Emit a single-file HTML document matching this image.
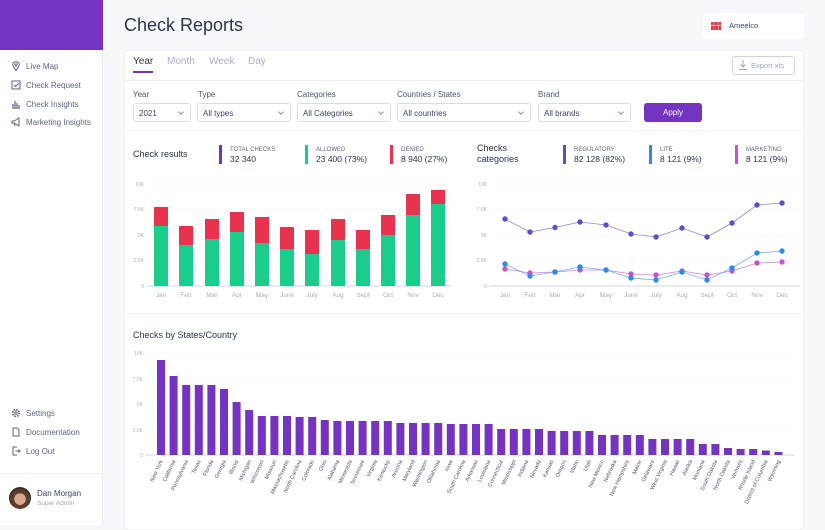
<!DOCTYPE html>
<html><head><meta charset="utf-8"><style>
*{margin:0;padding:0;box-sizing:border-box}
body{width:825px;height:525px;overflow:hidden;background:#f7f8fb;font-family:"Liberation Sans",sans-serif;position:relative;color:#2b3550}
.abs{position:absolute}
#side{left:0;top:0;width:103px;height:525px;background:#fff;border-right:1px solid #eceef3}
#logo{left:0;top:0;width:103px;height:50px;background:#7433c0}
.nav{position:absolute;left:11px;font-size:8px;color:#5a6680;display:flex;align-items:center;gap:5px}
.nav svg{width:10px;height:10px}
.lbl{font-size:8px;color:#4a5670;position:absolute}
.sel{position:absolute;height:19px;border:1px solid #d9dde6;border-radius:3px;font-size:8px;color:#3a4560;padding:5px 5px;background:#fff}
.sel:after{content:"";position:absolute;right:7px;top:6px;width:3px;height:3px;border-right:1px solid #8a93a8;border-bottom:1px solid #8a93a8;transform:rotate(45deg)}
</style></head><body>
<div id="side" class="abs"></div>
<div id="logo" class="abs"></div>
<div class="nav" style="top:61px"><svg viewBox="0 0 10 10"><path d="M5 9.5C3 7 1.8 5.5 1.8 3.8A3.2 3.2 0 0 1 8.2 3.8C8.2 5.5 7 7 5 9.5Z" fill="none" stroke="#5a6680"/><circle cx="5" cy="3.8" r="1.1" fill="none" stroke="#5a6680"/></svg>Live Map</div>
<div class="nav" style="top:80px"><svg viewBox="0 0 10 10"><rect x="1" y="1" width="8" height="8" fill="none" stroke="#5a6680"/><path d="M3 5l1.5 1.5L8 3" fill="none" stroke="#5a6680"/></svg>Check Request</div>
<div class="nav" style="top:99px"><svg viewBox="0 0 10 10"><path d="M1 9h8M2 8V5M4 8V2M6 8V4M8 8V6" stroke="#5a6680" stroke-width="1.2"/></svg>Check Insights</div>
<div class="nav" style="top:117px"><svg viewBox="0 0 10 10"><path d="M1 4h2l5-3v8L3 6H1z M3 6l1 3" fill="none" stroke="#5a6680"/></svg>Marketing Insights</div>
<div class="nav" style="top:408px"><svg viewBox="0 0 10 10"><circle cx="5" cy="5" r="3.3" fill="none" stroke="#5a6680" stroke-width="1.6" stroke-dasharray="1.6 1"/><circle cx="5" cy="5" r="1.2" fill="none" stroke="#5a6680"/></svg>Settings</div>
<div class="nav" style="top:427px"><svg viewBox="0 0 10 10"><path d="M2 1h4l2 2v6H2z" fill="none" stroke="#5a6680"/></svg>Documentation</div>
<div class="nav" style="top:446px"><svg viewBox="0 0 10 10"><path d="M6 1H2v8h4M4.5 5H9M7.5 3.5L9 5 7.5 6.5" fill="none" stroke="#5a6680"/></svg>Log Out</div>
<div class="abs" style="left:0;top:473px;width:103px;border-top:1px solid #eceef3"></div>
<div class="abs" style="left:9px;top:487px;width:22px;height:22px;border-radius:50%;background:radial-gradient(circle at 50% 55%,#d9a98a 0 35%,#5a3e30 36% 60%,#3a2a22 61%)"></div>
<div class="abs" style="left:37px;top:489px;font-size:8px;color:#3a4560">Dan Morgan</div>
<div class="abs" style="left:37px;top:500px;font-size:6.5px;color:#a0a8bb">Super Admin</div>

<div class="abs" style="left:124px;top:15px;font-size:18px;color:#2b3550">Check Reports</div>
<div class="abs" style="left:703px;top:13px;width:101px;height:26px;background:#fff;border-radius:4px"></div>
<div class="abs" style="left:711px;top:22px;width:10px;height:8px;background:repeating-linear-gradient(90deg,#e8323c 0 2px,#f7a0a4 2px 2.6px),#e8323c"></div>
<div class="abs" style="left:711px;top:25px;width:10px;height:1px;background:#fbc8ca"></div>
<div class="abs" style="left:729px;top:21px;font-size:7.5px;color:#3a4560">Ameelco</div>

<div class="abs" style="left:124px;top:50px;width:680px;height:480px;background:#fff;border:1px solid #eef0f4;border-radius:4px"></div>
<div class="abs" style="left:133px;top:56px;font-size:10px;color:#2b3550">Year</div>
<div class="abs" style="left:167px;top:56px;font-size:10px;color:#a8b0c2">Month</div>
<div class="abs" style="left:209px;top:56px;font-size:10px;color:#a8b0c2">Week</div>
<div class="abs" style="left:248px;top:56px;font-size:10px;color:#a8b0c2">Day</div>
<div class="abs" style="left:133px;top:71px;width:20px;height:2px;background:#7433c0"></div>
<div class="abs" style="left:732px;top:56px;width:63px;height:19px;border:1px solid #cfd4e0;border-radius:3px;font-size:7.5px;color:#a0a8bb;padding:4px 0 0 18px">Export xls</div>
<svg class="abs" style="left:738px;top:59px" width="10" height="12" viewBox="0 0 10 12"><path d="M5 1v7M2.5 5.5L5 8l2.5-2.5M1 10.5h8" fill="none" stroke="#a0a8bb"/></svg>
<div class="abs" style="left:125px;top:80px;width:678px;border-top:1px solid #eef0f4"></div>
<div class="lbl" style="left:133px;top:90px">Year</div>
<div class="lbl" style="left:198px;top:90px">Type</div>
<div class="lbl" style="left:297px;top:90px">Categories</div>
<div class="lbl" style="left:397px;top:90px">Countries / States</div>
<div class="lbl" style="left:538px;top:90px">Brand</div>
<div class="sel" style="left:133px;top:103px;width:58px">2021</div>
<div class="sel" style="left:197px;top:103px;width:94px">All types</div>
<div class="sel" style="left:297px;top:103px;width:94px">All Categories</div>
<div class="sel" style="left:397px;top:103px;width:134px">All countries</div>
<div class="sel" style="left:538px;top:103px;width:93px">All brands</div>
<div class="abs" style="left:644px;top:103px;width:58px;height:19px;background:#7433c0;border-radius:3px;color:#fff;font-size:8px;text-align:center;line-height:19px">Apply</div>
<div class="abs" style="left:125px;top:130px;width:678px;border-top:1px solid #eef0f4"></div>
<div class="abs" style="left:125px;top:313px;width:678px;border-top:1px solid #eef0f4"></div>

<svg class="abs" style="left:0;top:0" width="825" height="525" font-family="Liberation Sans, sans-serif">
<g font-size="9" fill="#2b3550">
<text x="133" y="157">Check results</text>
<text x="477" y="151">Checks</text><text x="477" y="162">categories</text>
<text x="133" y="338">Checks by States/Country</text>
</g>
<g font-size="6" fill="#5a6680">
<text x="230" y="151">TOTAL CHECKS</text><text x="316" y="151">ALLOWED</text><text x="401" y="151">DENIED</text>
<text x="574" y="151">REGULATORY</text><text x="660" y="151">LITE</text><text x="746" y="151">MARKETING</text>
</g>
<g font-size="8.5" fill="#2b3550">
<text x="230" y="162">32 340</text><text x="316" y="162">23 400 (73%)</text><text x="401" y="162">8 940 (27%)</text>
<text x="574" y="162">82 128 (82%)</text><text x="660" y="162">8 121 (9%)</text><text x="746" y="162">8 121 (9%)</text>
</g>
<rect x="219" y="145" width="3" height="19" fill="#7433c0"/><rect x="305" y="145" width="3" height="19" fill="#1ccc8c"/><rect x="390" y="145" width="3" height="19" fill="#e8324e"/>
<rect x="563" y="145" width="3" height="19" fill="#5b4fc8"/><rect x="649" y="145" width="3" height="19" fill="#2d8ae8"/><rect x="735" y="145" width="3" height="19" fill="#c455d0"/>
<g stroke="#f2f3f7" stroke-width="0.6">
<path d="M148 184H450M148 209.5H450M148 235H450M148 260.5H450"/>
<path d="M490 184H800M490 209.5H800M490 235H800M490 260.5H800"/>
<path d="M145 353H795M145 378.5H795M145 404H795M145 429.5H795"/>
</g>
<path d="M147 286H450M489 286H800M145 455H795" stroke="#c8cde0" stroke-width="0.8"/>
<g font-size="5" fill="#a8b0c2" text-anchor="end">
<text x="144" y="186">10K</text><text x="144" y="211">7.5K</text><text x="144" y="237">5K</text><text x="144" y="262">2.5K</text><text x="144" y="288">0</text>
<text x="487" y="186">10K</text><text x="487" y="211">7.5K</text><text x="487" y="237">5K</text><text x="487" y="262">2.5K</text><text x="487" y="288">0</text>
<text x="143" y="355">10K</text><text x="143" y="381">7.5K</text><text x="143" y="406">5K</text><text x="143" y="432">2.5K</text><text x="143" y="457">0</text>
</g>
<g font-size="6.5" fill="#a8b0c2" text-anchor="middle">
<text x="161" y="297">Jan</text><text x="186" y="297">Feb</text><text x="212" y="297">Mar</text><text x="237" y="297">Apr</text><text x="262" y="297">May</text><text x="287" y="297">June</text><text x="312" y="297">July</text><text x="338" y="297">Aug</text><text x="363" y="297">Sept</text><text x="388" y="297">Oct</text><text x="413" y="297">Nov</text><text x="438" y="297">Dec</text>
<text x="505" y="297">Jan</text><text x="530" y="297">Feb</text><text x="555" y="297">Mar</text><text x="580" y="297">Apr</text><text x="606" y="297">May</text><text x="631" y="297">June</text><text x="656" y="297">July</text><text x="682" y="297">Aug</text><text x="707" y="297">Sept</text><text x="732" y="297">Oct</text><text x="757" y="297">Nov</text><text x="782" y="297">Dec</text>
</g>
<g fill="#e8324e">
<rect x="154" y="207" width="14" height="79"/><rect x="179" y="226" width="14" height="60"/><rect x="205" y="219" width="14" height="67"/><rect x="230" y="212" width="14" height="74"/><rect x="255" y="217" width="14" height="69"/><rect x="280" y="227" width="14" height="59"/><rect x="305" y="230" width="14" height="56"/><rect x="331" y="219" width="14" height="67"/><rect x="356" y="230" width="14" height="56"/><rect x="381" y="215" width="14" height="71"/><rect x="406" y="194" width="14" height="92"/><rect x="431" y="190" width="14" height="96"/>
</g>
<g fill="#1ccc8c">
<rect x="154" y="226" width="14" height="60"/><rect x="179" y="245" width="14" height="41"/><rect x="205" y="239" width="14" height="47"/><rect x="230" y="232" width="14" height="54"/><rect x="255" y="243" width="14" height="43"/><rect x="280" y="249" width="14" height="37"/><rect x="305" y="254" width="14" height="32"/><rect x="331" y="240" width="14" height="46"/><rect x="356" y="249" width="14" height="37"/><rect x="381" y="235" width="14" height="51"/><rect x="406" y="215" width="14" height="71"/><rect x="431" y="204" width="14" height="82"/>
</g>
<g fill="none" stroke-width="0.8">
<polyline stroke="#8f86e0" points="505,219 530,232 555,227.5 580,222 606,225 631,234 656,237 682,228 707,237 732,223 757,205 782,203"/>
<polyline stroke="#d27ee0" points="505,269 530,273 555,272 580,270 606,270 631,274 656,275 682,271 707,275 732,271 757,263 782,262"/>
<polyline stroke="#6fb0f0" points="505,264 530,276 555,272 580,267 606,270 631,278 656,280 682,272 707,280 732,268 757,253 782,251"/>
</g>
<g fill="#5b4fc8"><circle cx="505" cy="219" r="2.7"/><circle cx="530" cy="232" r="2.7"/><circle cx="555" cy="227.5" r="2.7"/><circle cx="580" cy="222" r="2.7"/><circle cx="606" cy="225" r="2.7"/><circle cx="631" cy="234" r="2.7"/><circle cx="656" cy="237" r="2.7"/><circle cx="682" cy="228" r="2.7"/><circle cx="707" cy="237" r="2.7"/><circle cx="732" cy="223" r="2.7"/><circle cx="757" cy="205" r="2.7"/><circle cx="782" cy="203" r="2.7"/></g>
<g fill="#c455d0"><circle cx="505" cy="269" r="2.7"/><circle cx="530" cy="273" r="2.7"/><circle cx="555" cy="272" r="2.7"/><circle cx="580" cy="270" r="2.7"/><circle cx="606" cy="270" r="2.7"/><circle cx="631" cy="274" r="2.7"/><circle cx="656" cy="275" r="2.7"/><circle cx="682" cy="271" r="2.7"/><circle cx="707" cy="275" r="2.7"/><circle cx="732" cy="271" r="2.7"/><circle cx="757" cy="263" r="2.7"/><circle cx="782" cy="262" r="2.7"/></g>
<g fill="#2d8ae8"><circle cx="505" cy="264" r="2.7"/><circle cx="530" cy="276" r="2.7"/><circle cx="555" cy="272" r="2.7"/><circle cx="580" cy="267" r="2.7"/><circle cx="606" cy="270" r="2.7"/><circle cx="631" cy="278" r="2.7"/><circle cx="656" cy="280" r="2.7"/><circle cx="682" cy="272" r="2.7"/><circle cx="707" cy="280" r="2.7"/><circle cx="732" cy="268" r="2.7"/><circle cx="757" cy="253" r="2.7"/><circle cx="782" cy="251" r="2.7"/></g>
<g fill="#7433c0">
<rect x="157" y="360" width="8" height="95"/><rect x="169.6" y="376" width="8" height="79"/><rect x="182.2" y="385" width="8" height="70"/><rect x="194.8" y="385" width="8" height="70"/><rect x="207.4" y="385" width="8" height="70"/><rect x="220" y="389" width="8" height="66"/><rect x="232.6" y="402" width="8" height="53"/><rect x="245.2" y="410" width="8" height="45"/><rect x="257.8" y="416" width="8" height="39"/><rect x="270.4" y="416" width="8" height="39"/><rect x="283" y="416" width="8" height="39"/><rect x="295.6" y="417" width="8" height="38"/><rect x="308.2" y="417" width="8" height="38"/><rect x="320.8" y="420" width="8" height="35"/><rect x="333.4" y="421" width="8" height="34"/><rect x="346" y="421" width="8" height="34"/><rect x="358.6" y="421" width="8" height="34"/><rect x="371.2" y="421" width="8" height="34"/><rect x="383.8" y="421" width="8" height="34"/><rect x="396.4" y="423" width="8" height="32"/><rect x="409" y="423" width="8" height="32"/><rect x="421.6" y="423" width="8" height="32"/><rect x="434.2" y="423" width="8" height="32"/><rect x="446.8" y="424" width="8" height="31"/><rect x="459.4" y="424" width="8" height="31"/><rect x="472" y="424" width="8" height="31"/><rect x="484.6" y="424" width="8" height="31"/><rect x="497.2" y="429" width="8" height="26"/><rect x="509.8" y="429" width="8" height="26"/><rect x="522.4" y="429" width="8" height="26"/><rect x="535" y="429" width="8" height="26"/><rect x="547.6" y="431" width="8" height="24"/><rect x="560.2" y="431" width="8" height="24"/><rect x="572.8" y="431" width="8" height="24"/><rect x="585.4" y="431" width="8" height="24"/><rect x="598" y="435" width="8" height="20"/><rect x="610.6" y="435" width="8" height="20"/><rect x="623.2" y="435" width="8" height="20"/><rect x="635.8" y="435" width="8" height="20"/><rect x="648.4" y="439" width="8" height="16"/><rect x="661" y="439" width="8" height="16"/><rect x="673.6" y="439" width="8" height="16"/><rect x="686.2" y="439" width="8" height="16"/><rect x="698.8" y="444" width="8" height="11"/><rect x="711.4" y="444" width="8" height="11"/><rect x="724" y="448" width="8" height="7"/><rect x="736.6" y="449" width="8" height="6"/><rect x="749.2" y="449" width="8" height="6"/><rect x="761.8" y="450.5" width="8" height="4.5"/><rect x="774.4" y="452" width="8" height="3"/>
</g>
<g font-size="5.5" fill="#4a5670" text-anchor="end">
<text transform="translate(163,461) rotate(-65)">New York</text>
<text transform="translate(175.6,461) rotate(-65)">California</text>
<text transform="translate(188.2,461) rotate(-65)">Pennsylvania</text>
<text transform="translate(200.8,461) rotate(-65)">Texas</text>
<text transform="translate(213.4,461) rotate(-65)">Florida</text>
<text transform="translate(226,461) rotate(-65)">Georgia</text>
<text transform="translate(238.6,461) rotate(-65)">Illinois</text>
<text transform="translate(251.2,461) rotate(-65)">Michigan</text>
<text transform="translate(263.8,461) rotate(-65)">Wisconsin</text>
<text transform="translate(276.4,461) rotate(-65)">Missouri</text>
<text transform="translate(289,461) rotate(-65)">Massachusetts</text>
<text transform="translate(301.6,461) rotate(-65)">North Carolina</text>
<text transform="translate(314.2,461) rotate(-65)">Colorado</text>
<text transform="translate(326.8,461) rotate(-65)">Ohio</text>
<text transform="translate(339.4,461) rotate(-65)">Alabama</text>
<text transform="translate(352,461) rotate(-65)">Minnesota</text>
<text transform="translate(364.6,461) rotate(-65)">Tennessee</text>
<text transform="translate(377.2,461) rotate(-65)">Virginia</text>
<text transform="translate(389.8,461) rotate(-65)">Kentucky</text>
<text transform="translate(402.4,461) rotate(-65)">Arizona</text>
<text transform="translate(415,461) rotate(-65)">Maryland</text>
<text transform="translate(427.6,461) rotate(-65)">Washington</text>
<text transform="translate(440.2,461) rotate(-65)">Oklahoma</text>
<text transform="translate(452.8,461) rotate(-65)">Iowa</text>
<text transform="translate(465.4,461) rotate(-65)">South Carolina</text>
<text transform="translate(478,461) rotate(-65)">Arkansas</text>
<text transform="translate(490.6,461) rotate(-65)">Louisiana</text>
<text transform="translate(503.2,461) rotate(-65)">Connecticut</text>
<text transform="translate(515.8,461) rotate(-65)">Mississippi</text>
<text transform="translate(528.4,461) rotate(-65)">Indiana</text>
<text transform="translate(541,461) rotate(-65)">Nevada</text>
<text transform="translate(553.6,461) rotate(-65)">Kansas</text>
<text transform="translate(566.2,461) rotate(-65)">Oregon</text>
<text transform="translate(578.8,461) rotate(-65)">Idaho</text>
<text transform="translate(591.4,461) rotate(-65)">Utah</text>
<text transform="translate(604,461) rotate(-65)">New Mexico</text>
<text transform="translate(616.6,461) rotate(-65)">Nebraska</text>
<text transform="translate(629.2,461) rotate(-65)">New Hampshire</text>
<text transform="translate(641.8,461) rotate(-65)">Maine</text>
<text transform="translate(654.4,461) rotate(-65)">Delaware</text>
<text transform="translate(667,461) rotate(-65)">West Virginia</text>
<text transform="translate(679.6,461) rotate(-65)">Hawaii</text>
<text transform="translate(692.2,461) rotate(-65)">Alaska</text>
<text transform="translate(704.8,461) rotate(-65)">Montana</text>
<text transform="translate(717.4,461) rotate(-65)">South Dakota</text>
<text transform="translate(730,461) rotate(-65)">North Dakota</text>
<text transform="translate(742.6,461) rotate(-65)">Vermont</text>
<text transform="translate(755.2,461) rotate(-65)">Rhode Island</text>
<text transform="translate(767.8,461) rotate(-65)">District of Columbia</text>
<text transform="translate(780.4,461) rotate(-65)">Wyoming</text>
</g>
</svg>
</body></html>
